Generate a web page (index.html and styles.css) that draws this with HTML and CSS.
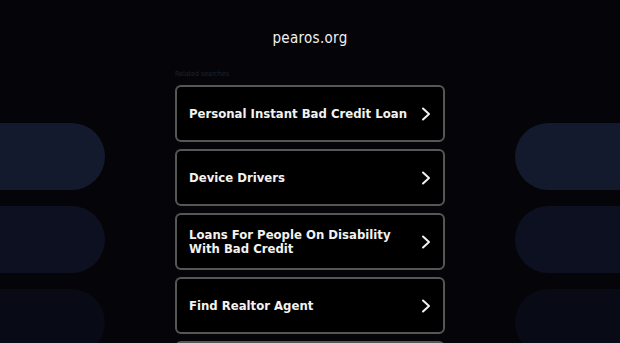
FILE: index.html
```html
<!DOCTYPE html>
<html lang="en">
<head>
    <meta charset="UTF-8">
    <meta name="viewport" content="width=device-width, initial-scale=1.0">
    <title>pearos.org</title>
    <link rel="stylesheet" href="styles.css">
</head>
<body>
    <div class="page">
        <div class="decor decor-left">
            <div class="pill pill-1"></div>
            <div class="pill pill-2"></div>
            <div class="pill pill-3"></div>
        </div>

        <div class="main">
            <div class="brand">pearos.org</div>
            <div class="related">Related searches</div>
            <div class="links">
                <a class="link" href="#">
                    <span>Personal Instant Bad Credit Loan</span>
                    <svg class="chevron" width="10" height="14" viewBox="0 0 10 14"><polyline points="2,1.5 8,7 2,12.5"/></svg>
                </a>
                <a class="link" href="#">
                    <span>Device Drivers</span>
                    <svg class="chevron" width="10" height="14" viewBox="0 0 10 14"><polyline points="2,1.5 8,7 2,12.5"/></svg>
                </a>
                <a class="link" href="#">
                    <span>Loans For People On Disability With Bad Credit</span>
                    <svg class="chevron" width="10" height="14" viewBox="0 0 10 14"><polyline points="2,1.5 8,7 2,12.5"/></svg>
                </a>
                <a class="link" href="#">
                    <span>Find Realtor Agent</span>
                    <svg class="chevron" width="10" height="14" viewBox="0 0 10 14"><polyline points="2,1.5 8,7 2,12.5"/></svg>
                </a>
                <a class="link" href="#">
                    <span>Online Degree Programs</span>
                    <svg class="chevron" width="10" height="14" viewBox="0 0 10 14"><polyline points="2,1.5 8,7 2,12.5"/></svg>
                </a>
            </div>
        </div>

        <div class="decor decor-right">
            <div class="pill pill-1"></div>
            <div class="pill pill-2"></div>
            <div class="pill pill-3"></div>
        </div>
    </div>
</body>
</html>
```

FILE: styles.css
```css
html, body {
    margin: 0;
    height: 100%;
}
body {
    font-family: "DejaVu Sans Condensed", "DejaVu Sans", Verdana, sans-serif;
    background-color: #050509;
    color: #fff;
    overflow: hidden;
}
.page {
    display: grid;
    grid-template-columns: 105px 1fr 105px;
    height: 343px;
    overflow: hidden;
}
.decor {
    display: flex;
    flex-direction: column;
    gap: 16px;
    padding-top: 123px;
}
.pill {
    height: 67px;
    flex-shrink: 0;
}
.decor-left .pill {
    border-radius: 0 34px 34px 0;
}
.decor-right .pill {
    border-radius: 34px 0 0 34px;
}
.pill-1 {
    background-color: #141a2d;
}
.pill-2 {
    background-color: #0d1020;
}
.pill-3 {
    background-color: #080a15;
}
.main {
    display: flex;
    flex-direction: column;
    align-items: center;
}
.brand {
    font-size: 15px;
    color: #f0f0f0;
    padding-top: 29px;
    line-height: 18px;
    letter-spacing: 0.3px;
}
.related {
    width: 270px;
    font-size: 7px;
    color: #20222c;
    margin-top: 23px;
    line-height: 9px;
}
.links {
    width: 270px;
    display: flex;
    flex-direction: column;
    gap: 7px;
    margin-top: 6px;
}
.link {
    box-sizing: border-box;
    height: 57px;
    display: flex;
    align-items: center;
    justify-content: space-between;
    padding: 0 12px 0 12px;
    border: 2px solid #565656;
    border-radius: 6px;
    background-color: #000;
    color: #f2f2f2;
    text-decoration: none;
    font-weight: bold;
    font-size: 13px;
    line-height: 14px;
    flex-shrink: 0;
}
.link span {
    max-width: 222px;
}
.chevron {
    fill: none;
    stroke: #f2f2f2;
    stroke-width: 2;
    stroke-linecap: round;
    stroke-linejoin: round;
}
```
